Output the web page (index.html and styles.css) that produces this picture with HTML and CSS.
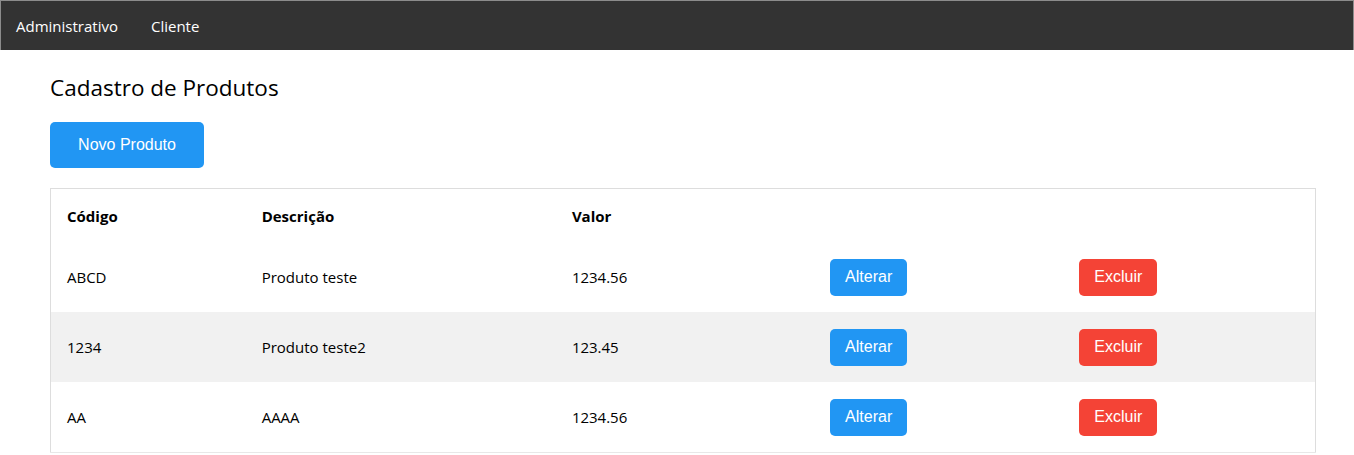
FILE: index.html
```html
<!DOCTYPE html>
<html lang="pt">
<head>
<meta charset="utf-8">
<title>Cadastro de Produtos</title>
<link rel="stylesheet" href="styles.css">
</head>
<body>
<nav class="topbar">
  <a class="topbar-item" href="#">Administrativo</a>
  <a class="topbar-item" href="#">Cliente</a>
</nav>
<main class="container">
  <h2 class="title">Cadastro de Produtos</h2>
  <button class="btn btn-blue btn-large">Novo Produto</button>
  <table class="table">
    <colgroup>
      <col class="c1"><col class="c2"><col class="c3"><col class="c4"><col class="c5">
    </colgroup>
    <thead>
      <tr class="head-row">
        <th>Código</th><th>Descrição</th><th>Valor</th><th></th><th></th>
      </tr>
    </thead>
    <tbody>
      <tr>
        <td>ABCD</td><td>Produto teste</td><td>1234.56</td>
        <td><button class="btn btn-blue">Alterar</button></td>
        <td><button class="btn btn-red">Excluir</button></td>
      </tr>
      <tr class="stripe">
        <td>1234</td><td>Produto teste2</td><td>123.45</td>
        <td><button class="btn btn-blue">Alterar</button></td>
        <td><button class="btn btn-red">Excluir</button></td>
      </tr>
      <tr>
        <td>AA</td><td>AAAA</td><td>1234.56</td>
        <td><button class="btn btn-blue">Alterar</button></td>
        <td><button class="btn btn-red">Excluir</button></td>
      </tr>
    </tbody>
  </table>
</main>
</body>
</html>
```

FILE: styles.css
```css
html, body {
  margin: 0;
  padding: 0;
  background: #fff;
}
body {
  font-family: "Open Sans", "Noto Sans", sans-serif;
  font-size: 15px;
  color: #000;
}
.topbar {
  display: flex;
  align-items: center;
  height: 49px;
  background: #333;
  border: 1px solid #8c8c8c;
  border-bottom: none;
}
.topbar-item {
  color: #fff;
  text-decoration: none;
  padding: 8px 16px 8px 15px;
  font-size: 15px;
}
.topbar-item + .topbar-item {
  padding-left: 17px;
}
.container {
  padding: 0 38px 0 50px;
}
.title {
  margin: 23px 0 0;
  font-weight: 400;
  font-size: 22.5px;
  line-height: 30px;
}
.btn {
  border: none;
  color: #fff;
  font-family: "Liberation Sans", Arial, sans-serif;
  font-size: 16px;
  border-radius: 5px;
  padding: 0 15px;
  height: 37px;
  cursor: pointer;
}
.btn-blue { background: #2196f3; }
.btn-red { background: #f44336; }
.btn-large {
  margin-top: 19px;
  height: 46px;
  width: 154px;
  padding: 0;
  display: block;
}
.table {
  margin-top: 20px;
  width: 1266px;
  border-collapse: collapse;
  table-layout: fixed;
  border: 1px solid #ddd;
}
.c1 { width: 195px; }
.c2 { width: 310px; }
.c3 { width: 258px; }
.c4 { width: 249px; }
.c5 { width: 252px; }
.table th, .table td {
  text-align: left;
  padding: 0 16px;
  vertical-align: middle;
}
.table th {
  font-weight: 700;
  height: 52px;
  padding-top: 1px;
}
.table td {
  height: 70px;
}
.table tbody tr:last-child td {
  border-bottom: 1px solid #e8e8e8;
}
.head-row { background: #fff; }
.stripe { background: #f1f1f1; }
```
